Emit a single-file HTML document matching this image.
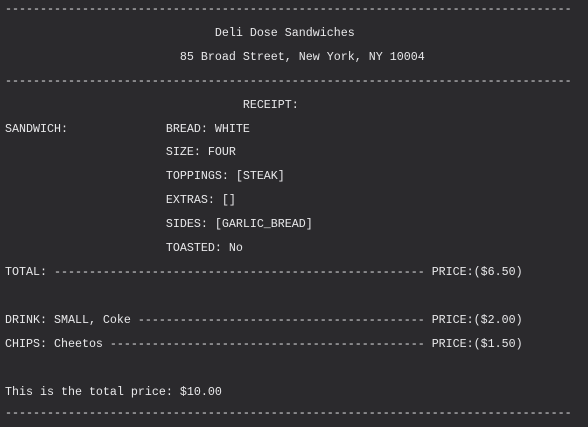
<!DOCTYPE html>
<html><head><style>
html,body{margin:0;padding:0;background:#2b2a2d;width:588px;height:427px;overflow:hidden}
pre{margin:0;position:absolute;left:5px;font-family:"Liberation Mono",monospace;font-size:11.67px;line-height:23.9px;color:#e8e8ea}
</style></head><body><pre style="top:-2px">---------------------------------------------------------------------------------
                              Deli Dose Sandwiches
                         85 Broad Street, New York, NY 10004
---------------------------------------------------------------------------------
                                  RECEIPT:
SANDWICH:              BREAD: WHITE
                       SIZE: FOUR
                       TOPPINGS: [STEAK]
                       EXTRAS: []
                       SIDES: [GARLIC_BREAD]
                       TOASTED: No
TOTAL: ----------------------------------------------------- PRICE:($6.50)

DRINK: SMALL, Coke ----------------------------------------- PRICE:($2.00)
CHIPS: Cheetos --------------------------------------------- PRICE:($1.50)

This is the total price: $10.00</pre><pre style="top:402px">---------------------------------------------------------------------------------</pre></body></html>
